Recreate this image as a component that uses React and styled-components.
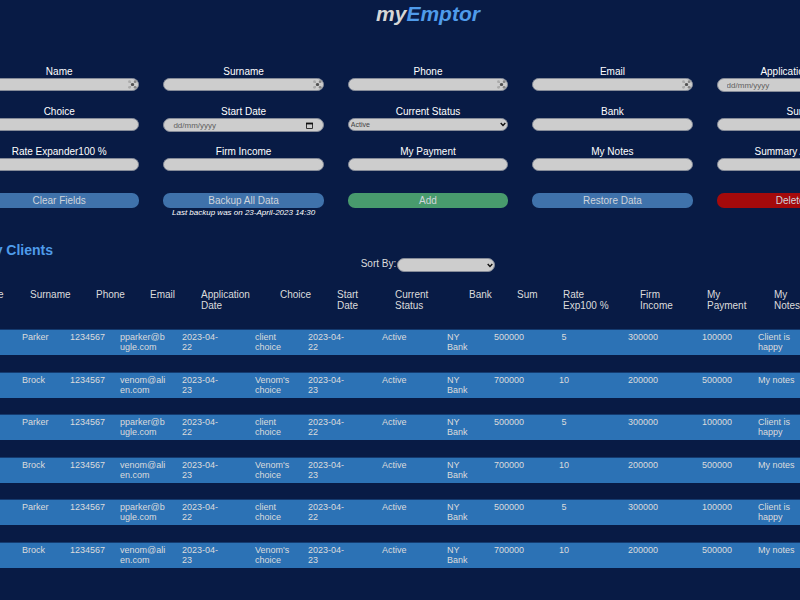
import React, { useState } from "react";
import styled, { createGlobalStyle } from "styled-components";

const GlobalStyle = createGlobalStyle`
  * { box-sizing: border-box; }
  html, body { margin: 0; background: #081b45; }
  body, button, input, select {
    font-family: "Liberation Sans", Arial, sans-serif;
  }
`;

const Viewport = styled.div`
  min-height: 100vh;
  overflow: hidden;
  color: #dcdcdc;
  background: #081b45;
`;

const Page = styled.main`
  width: calc(100% + 112px);
  margin-left: -28px;
`;

const Title = styled.h1`
  margin: 0;
  padding-top: 2px;
  font-size: 21px;
  line-height: 24px;
  font-style: italic;
  text-align: center;
  color: #d6d6d6;
`;

const Accent = styled.span`
  color: #4f9bea;
`;

const Form = styled.form`
  margin-top: 40px;
  padding: 0 7px;
`;

const Fields = styled.div`
  display: grid;
  grid-template-columns: repeat(5, 1fr);
  grid-auto-rows: 40px;
  column-gap: 24px;
`;

const Field = styled.div`
  display: flex;
  flex-direction: column;
`;

const Label = styled.label`
  font-size: 10px;
  line-height: 12px;
  text-align: center;
  color: #ffffff;
`;

const Control = styled.div`
  position: relative;
  display: flex;
  width: ${(p) => p.$width || "100%"};
`;

const Input = styled.input`
  width: 100%;
  height: ${(p) => (p.$date ? 14 : 13)}px;
  padding: 0 9px;
  border: 1px solid #858b98;
  border-radius: 7px;
  outline: none;
  font-size: ${(p) => (p.$date ? 8 : 7)}px;
  color: #444444;
  background: #cdcdcd;
  &::placeholder { color: #606060; opacity: 1; }
`;

const Select = styled.select`
  appearance: none;
  width: 100%;
  height: ${(p) => (p.$tall ? 14 : 13)}px;
  padding: 0 12px 0 2px;
  border: 1px solid #858b98;
  border-radius: 7px;
  font-size: 7px;
  color: #444444;
  background: #cdcdcd;
`;

const Adornment = styled.span`
  position: absolute;
  top: 0;
  bottom: 0;
  right: ${(p) => p.$right}px;
  display: flex;
  align-items: center;
  pointer-events: none;
`;

const Actions = styled.div`
  display: grid;
  grid-template-columns: repeat(5, 1fr);
  align-items: start;
  column-gap: 24px;
  height: 24px;
  margin-top: 7px;
`;

const tones = { blue: "#3f72ab", green: "#489b6d", red: "#a40a0b" };

const Action = styled.button`
  display: block;
  width: 100%;
  height: 15px;
  padding: 0;
  border: 0;
  border-radius: 7px;
  font-size: 10px;
  line-height: 15px;
  color: #d0d5dc;
  background: ${(p) => tones[p.$tone]};
`;

const BackupNote = styled.p`
  margin: 0;
  font-size: 8px;
  line-height: 9px;
  font-style: italic;
  text-align: center;
  white-space: nowrap;
  color: #ffffff;
`;

const Heading = styled.h2`
  margin: 25px 0 0;
  padding-left: 11px;
  font-size: 14px;
  line-height: 16px;
  color: #4f9bea;
`;

const SortBar = styled.div`
  display: flex;
  justify-content: center;
  align-items: flex-start;
  gap: 1px;
  font-size: 10px;
  line-height: 12px;
`;

const ClientTable = styled.table`
  display: block;
  width: 100%;
  margin-top: 17px;
`;

const TableHead = styled.thead`
  display: block;
  height: 41px;
`;

const HeadRow = styled.tr`
  display: grid;
  padding-left: 5px;
  grid-template-columns: 53fr 66fr 54fr 51fr 79fr 57fr 58fr 74fr 48fr 46fr 77fr 67fr 67fr 50fr 60fr;
`;

const HeadCell = styled.th`
  padding: 0;
  font-size: 10px;
  font-weight: 400;
  line-height: 11px;
  text-align: left;
`;

const HeadText = styled.span`
  display: block;
  width: min-content;
  white-space: pre;
`;

const TableBody = styled.tbody`
  display: block;
`;

const Row = styled.tr`
  display: grid;
  grid-template-columns: 50fr 48fr 50fr 62fr 73fr 53fr 74fr 65fr 47fr 64fr 70fr 74fr 56fr 68fr 58fr;
  min-height: 25px;
  margin-bottom: ${(p) => (p.$even ? 17 : 18)}px;
  background: #2c72b5;
  box-shadow: 0 -1px #143b70;
`;

const cellPadding = { normal: 15, tight: 8, wide: 28, rate: 58 };

const Cell = styled.td`
  padding: 2px ${(p) => cellPadding[p.$fit]}px 0 0;
  font-size: 9px;
  line-height: 10px;
  overflow-wrap: ${(p) => (p.$fit === "normal" ? "anywhere" : "normal")};
  text-align: ${(p) => (p.$fit === "rate" ? "center" : "left")};
`;

const DotsIcon = () => (
  <svg width="9" height="9" viewBox="0 0 9 9" aria-hidden="true">
    <path d="M1.5 1.5 7.5 7.5M7.5 1.5 1.5 7.5" stroke="#a6a6a6" strokeWidth="1" />
    <g fill="#aaaaaa">
      <circle cx="1.5" cy="1.7" r="1.4" />
      <circle cx="1.5" cy="7.3" r="1.4" />
    </g>
    <g fill="#858585">
      <circle cx="7.2" cy="1.7" r="1.4" />
      <circle cx="7.2" cy="7.3" r="1.4" />
    </g>
    <circle cx="4.5" cy="4.5" r="1.6" fill="#505050" />
  </svg>
);

const CalendarIcon = () => (
  <svg width="7" height="7" viewBox="0 0 7 7" aria-hidden="true">
    <path d="M.5 1.5h6v5h-6z" fill="none" stroke="#333" />
    <path d="M0 .6h7v1.8H0z" fill="#111" />
  </svg>
);

const ChevronIcon = () => (
  <svg width="6" height="5" viewBox="0 0 6 5" aria-hidden="true">
    <path d="M.7 1 3 3.4 5.3 1" fill="none" stroke="#111" strokeWidth="1.4" />
  </svg>
);

const fields = [
  { name: "Name", dots: true },
  { name: "Surname", dots: true },
  { name: "Phone", dots: true },
  { name: "Email", dots: true },
  { name: "Application Date", date: true },
  { name: "Choice" },
  { name: "Start Date", date: true },
  { name: "Current Status", options: ["Active", "Closed"] },
  { name: "Bank" },
  { name: "Sum" },
  { name: "Rate Expander100 %" },
  { name: "Firm Income" },
  { name: "My Payment" },
  { name: "My Notes" },
  { name: "Summary Amounts" },
];

const headings = [
  "Name", "Surname", "Phone", "Email", "Application\nDate", "Choice",
  "Start\nDate", "Current\nStatus", "Bank", "Sum", "Rate\nExp100 %",
  "Firm\nIncome", "My\nPayment", "My\nNotes", "Summary",
];

const columnFit = { 2: "tight", 4: "wide", 6: "wide", 10: "rate" };

const parker = ["Peter", "Parker", "1234567", "pparker@bugle.com", "2023-04-22", "client choice", "2023-04-22", "Active", "NY Bank", "500000", "5", "300000", "100000", "Client is happy", "Summary"];
const brock = ["Eddie", "Brock", "1234567", "venom@alien.com", "2023-04-23", "Venom's choice", "2023-04-23", "Active", "NY Bank", "700000", "10", "200000", "500000", "My notes", "Summary"];
const clients = [parker, brock, parker, brock, parker, brock];

function FormField({ name, dots, date, options }) {
  const id = name.toLowerCase().replace(/[^a-z0-9]+/g, "-");
  return (
    <Field>
      <Label htmlFor={id}>{name}</Label>
      <Control>
        {options ? (
          <Select id={id}>
            {options.map((o) => <option key={o}>{o}</option>)}
          </Select>
        ) : (
          <Input id={id} $date={date} placeholder={date ? "dd/mm/yyyy" : undefined} />
        )}
        {dots && <Adornment $right={2}><DotsIcon /></Adornment>}
        {date && <Adornment $right={11}><CalendarIcon /></Adornment>}
        {options && <Adornment $right={2}><ChevronIcon /></Adornment>}
      </Control>
    </Field>
  );
}

export default function App() {
  const [sort, setSort] = useState("");
  return (
    <Viewport>
      <GlobalStyle />
      <Page>
        <Title>my<Accent>Emptor</Accent></Title>
        <Form onSubmit={(e) => e.preventDefault()}>
          <Fields>
            {fields.map((f) => <FormField key={f.name} {...f} />)}
          </Fields>
          <Actions>
            <Action type="reset" $tone="blue">Clear Fields</Action>
            <div>
              <Action type="button" $tone="blue">Backup All Data</Action>
              <BackupNote>Last backup was on 23-April-2023 14:30</BackupNote>
            </div>
            <Action type="submit" $tone="green">Add</Action>
            <Action type="button" $tone="blue">Restore Data</Action>
            <Action type="button" $tone="red">Delete All</Action>
          </Actions>
        </Form>
        <Heading>My Clients</Heading>
        <SortBar>
          <label htmlFor="sort">Sort By:</label>
          <Control $width="98px">
            <Select id="sort" $tall value={sort} onChange={(e) => setSort(e.target.value)}>
              <option value=""></option>
              <option>Name</option>
              <option>Surname</option>
            </Select>
            <Adornment $right={2}><ChevronIcon /></Adornment>
          </Control>
        </SortBar>
        <ClientTable>
          <TableHead>
            <HeadRow>
              {headings.map((h) => (
                <HeadCell key={h} scope="col"><HeadText>{h}</HeadText></HeadCell>
              ))}
            </HeadRow>
          </TableHead>
          <TableBody>
            {clients.map((client, i) => (
              <Row key={i} $even={i % 2 === 1}>
                {client.map((value, j) => (
                  <Cell key={j} $fit={columnFit[j] || "normal"}>{value}</Cell>
                ))}
              </Row>
            ))}
          </TableBody>
        </ClientTable>
      </Page>
    </Viewport>
  );
}
